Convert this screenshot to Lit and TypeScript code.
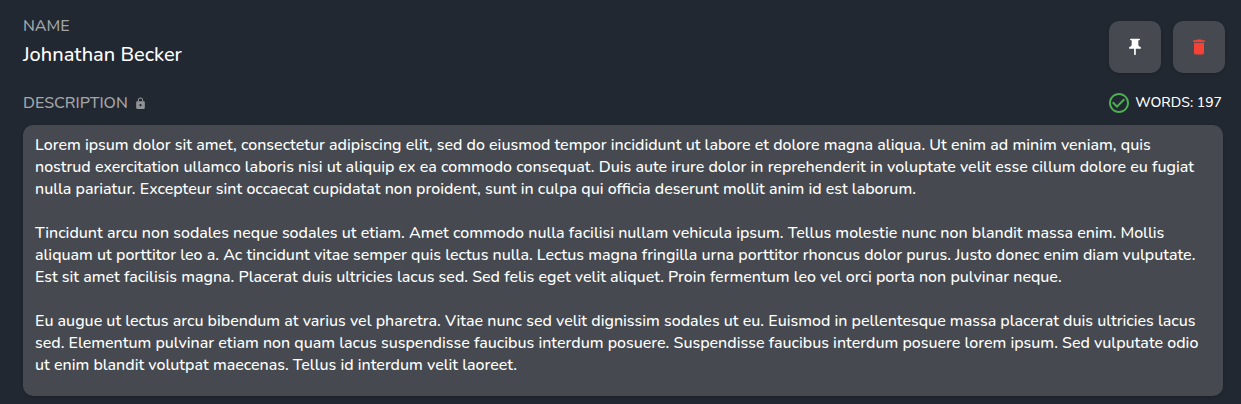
import { LitElement, html, css } from "lit";
import { customElement, property } from "lit/decorators.js";

const DESCRIPTION = [
  "Lorem ipsum dolor sit amet, consectetur adipiscing elit, sed do eiusmod tempor incididunt ut labore et dolore magna aliqua. Ut enim ad minim veniam, quis nostrud exercitation ullamco laboris nisi ut aliquip ex ea commodo consequat. Duis aute irure dolor in reprehenderit in voluptate velit esse cillum dolore eu fugiat nulla pariatur. Excepteur sint occaecat cupidatat non proident, sunt in culpa qui officia deserunt mollit anim id est laborum.",
  "Tincidunt arcu non sodales neque sodales ut etiam. Amet commodo nulla facilisi nullam vehicula ipsum. Tellus molestie nunc non blandit massa enim. Mollis aliquam ut porttitor leo a. Ac tincidunt vitae semper quis lectus nulla. Lectus magna fringilla urna porttitor rhoncus dolor purus. Justo donec enim diam vulputate. Est sit amet facilisis magna. Placerat duis ultricies lacus sed. Sed felis eget velit aliquet. Proin fermentum leo vel orci porta non pulvinar neque.",
  "Eu augue ut lectus arcu bibendum at varius vel pharetra. Vitae nunc sed velit dignissim sodales ut eu. Euismod in pellentesque massa placerat duis ultricies lacus sed. Elementum pulvinar etiam non quam lacus suspendisse faucibus interdum posuere. Suspendisse faucibus interdum posuere lorem ipsum. Sed vulputate odio ut enim blandit volutpat maecenas. Tellus id interdum velit laoreet.",
].join("\n\n");

@customElement("app-root")
export class AppRoot extends LitElement {
  @property() name = "Johnathan Becker";
  @property() description = DESCRIPTION;
  @property({ type: Number }) words = 197;

  static styles = css`
    :host {
      display: block;
      box-sizing: border-box;
      min-height: 100vh;
      padding: 14px 16px 8px 23px;
      background: #222831;
      color: #fff;
      font: 500 16px/22px Nunito, Lato, sans-serif;
    }
    svg {
      display: block;
      fill: currentColor;
    }
    .header,
    .meta {
      display: flex;
      justify-content: space-between;
    }
    .identity {
      display: flex;
      flex-direction: column;
      gap: 4px;
    }
    .label {
      color: #a3a6a9;
      line-height: 24px;
    }
    .name {
      margin: 0;
      font-size: 20px;
      font-weight: 500;
      line-height: 26px;
    }
    .actions {
      display: flex;
      gap: 12px;
      padding-top: 7px;
    }
    .action {
      display: grid;
      place-items: center;
      width: 52px;
      height: 52px;
      padding: 0;
      border: 0;
      border-radius: 10px;
      background: #464a50;
      color: #fff;
      box-shadow: 0 1px 3px rgb(0 0 0 / 20%);
      cursor: pointer;
    }
    .danger {
      color: #f44336;
    }
    .details {
      padding-right: 2px;
    }
    .meta {
      align-items: center;
      padding: 18px 0 10px;
    }
    .locked {
      display: flex;
      align-items: center;
      gap: 6px;
    }
    .lock {
      color: #909396;
    }
    .count {
      display: flex;
      align-items: center;
      gap: 4px;
      padding-right: 1px;
      font-size: 14px;
    }
    .valid {
      color: #4caf50;
    }
    .text {
      display: block;
      box-sizing: border-box;
      width: 100%;
      margin: 0;
      padding: 9px 18px 20px 12px;
      border: 0;
      border-radius: 10px;
      outline: 0;
      resize: none;
      field-sizing: content;
      overflow: hidden;
      background: #464a50;
      color: inherit;
      font: inherit;
      box-shadow: 0 1px 3px rgb(0 0 0 / 20%);
    }
  `;

  render() {
    return html`
      <div class="header">
        <div class="identity">
          <div class="label">NAME</div>
          <h1 class="name">${this.name}</h1>
        </div>
        <div class="actions">
          <button class="action" type="button" aria-label="Pin">
            <svg width="20" height="20" viewBox="0 0 24 24">
              <path d="M16 9V4h1c.55 0 1-.45 1-1s-.45-1-1-1H7c-.55 0-1 .45-1 1s.45 1 1 1h1v5c0 1.660-1.340 3-3 3v2h5.970v7l1 1 1-1v-7H19v-2c-1.660 0-3-1.340-3-3z" />
            </svg>
          </button>
          <button class="action danger" type="button" aria-label="Delete">
            <svg width="20" height="20" viewBox="0 0 24 24">
              <path d="M6 19c0 1.100.9 2 2 2h8c1.100 0 2-.9 2-2V7H6v12zM19 4h-3.500l-1-1h-5l-1 1H5v2h14V4z" />
            </svg>
          </button>
        </div>
      </div>
      <div class="details">
        <div class="meta">
          <div class="locked">
            <label class="label" for="description">DESCRIPTION</label>
            <svg class="lock" width="13" height="13" viewBox="0 0 24 24">
              <path d="M18 8h-1V6c0-2.760-2.240-5-5-5S7 3.240 7 6v2H6c-1.100 0-2 .9-2 2v10c0 1.100.9 2 2 2h12c1.100 0 2-.9 2-2V10c0-1.100-.9-2-2-2zm-6 9c-1.100 0-2-.9-2-2s.9-2 2-2 2 .9 2 2-.9 2-2 2zm3.100-9H8.900V6c0-1.710 1.390-3.100 3.100-3.100s3.100 1.390 3.100 3.100v2z" />
            </svg>
          </div>
          <div class="count">
            <svg class="valid" width="24" height="24" viewBox="0 0 24 24">
              <path d="M16.590 7.580 10 14.170l-3.590-3.580L5 12l5 5 8-8zM12 2C6.480 2 2 6.480 2 12s4.480 10 10 10 10-4.480 10-10S17.520 2 12 2zm0 18c-4.420 0-8-3.580-8-8s3.580-8 8-8 8 3.580 8 8-3.580 8-8 8z" />
            </svg>
            <span>WORDS: ${this.words}</span>
          </div>
        </div>
        <textarea class="text" id="description" readonly spellcheck="false" .value=${this.description}></textarea>
      </div>
    `;
  }
}
